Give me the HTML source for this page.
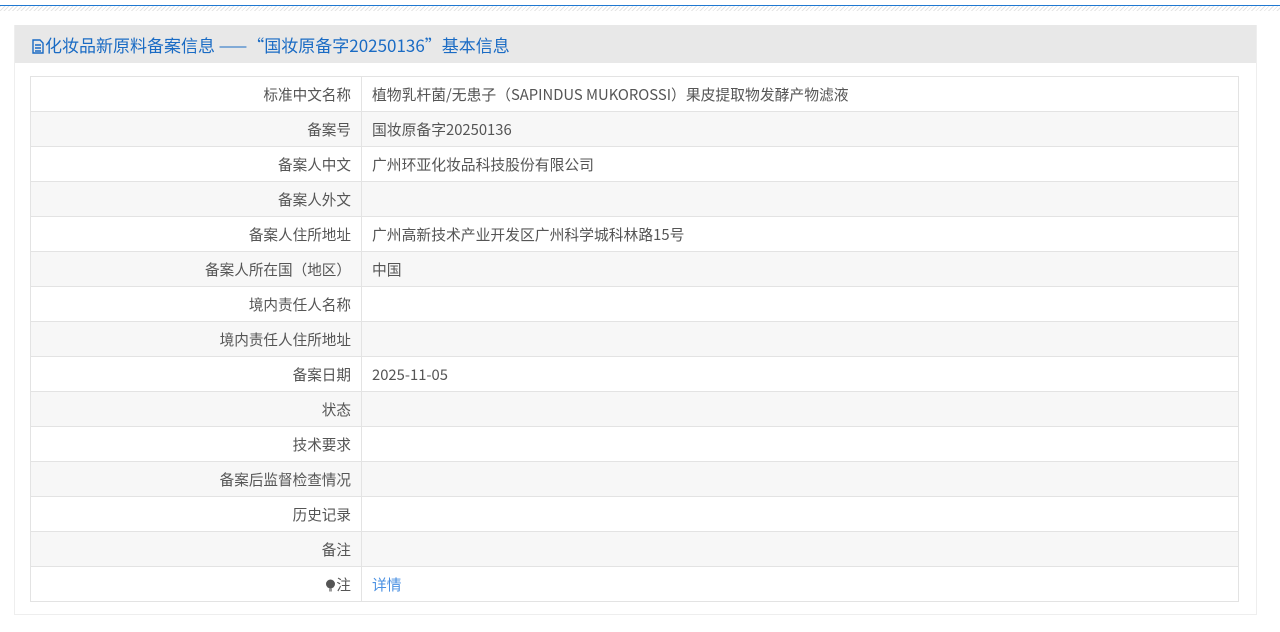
<!DOCTYPE html>
<html><head><meta charset="utf-8"><style>
body{margin:0;background:#fff;font-family:"Noto Sans CJK SC","Liberation Sans",sans-serif;width:1280px;height:632px;overflow:hidden;position:relative}
.topline{position:absolute;left:0;top:5px;width:1280px;height:1px;background:#1f78d1}
.hatch{position:absolute;left:0;top:6px;width:1280px;height:5px;background:repeating-linear-gradient(135deg,#e4e4e4 0 1px,#fff 1px 3px)}
.panel{position:absolute;left:14px;top:25px;width:1241px;height:589px;border:1px solid #eee;border-top:none;background:#fff}
.hd{height:38px;background:#e8e8e8;color:#1a6bc4;font-size:17px;line-height:40px;padding-left:16px;white-space:nowrap}
table{position:absolute;left:15px;top:51px;width:1209px;border-collapse:collapse;font-size:14.8px;color:#555}
td{height:34px;border:1px solid #e3e3e3;padding:0 10px;line-height:19px}
td.l{width:310px;text-align:right;font-size:14.6px}
tr:nth-child(even) td{background:#f7f7f7}
a{color:#4a90e2;text-decoration:none}
</style></head><body>
<div class="topline"></div><div class="hatch"></div>
<div class="panel">
<div class="hd"><svg width="14" height="15" viewBox="0 0 14 15" style="vertical-align:-2px"><path d="M2 1h7l3 3v10H2z M4 6h6M4 9h6M4 12h6" fill="none" stroke="#1a6bc4" stroke-width="1.4"/></svg>化妆品新原料备案信息 ——“国妆原备字20250136”基本信息</div>
<table>
<tr><td class="l">标准中文名称</td><td>植物乳杆菌/无患子（SAPINDUS MUKOROSSI）果皮提取物发酵产物滤液</td></tr>
<tr><td class="l">备案号</td><td>国妆原备字20250136</td></tr>
<tr><td class="l">备案人中文</td><td>广州环亚化妆品科技股份有限公司</td></tr>
<tr><td class="l">备案人外文</td><td></td></tr>
<tr><td class="l">备案人住所地址</td><td>广州高新技术产业开发区广州科学城科林路15号</td></tr>
<tr><td class="l">备案人所在国（地区）</td><td>中国</td></tr>
<tr><td class="l">境内责任人名称</td><td></td></tr>
<tr><td class="l">境内责任人住所地址</td><td></td></tr>
<tr><td class="l">备案日期</td><td>2025-11-05</td></tr>
<tr><td class="l">状态</td><td></td></tr>
<tr><td class="l">技术要求</td><td></td></tr>
<tr><td class="l">备案后监督检查情况</td><td></td></tr>
<tr><td class="l">历史记录</td><td></td></tr>
<tr><td class="l">备注</td><td></td></tr>
<tr><td class="l"><svg width="11" height="13" viewBox="0 0 11 13" style="vertical-align:-2px"><circle cx="5.5" cy="5" r="4.5" fill="#555"/><rect x="4" y="9.5" width="3" height="3" fill="#999"/></svg>注</td><td><a>详情</a></td></tr>
</table>
</div>
</body></html>
